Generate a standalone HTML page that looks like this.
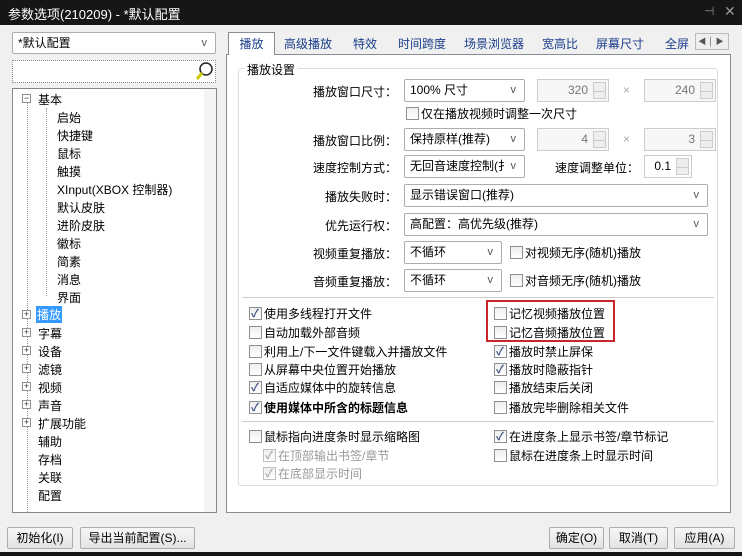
<!DOCTYPE html>
<html><head><meta charset="utf-8"><style>
*{box-sizing:border-box;margin:0;padding:0}
body{width:742px;height:556px;background:#f0f0f0;font-family:"Liberation Sans","Noto Sans CJK SC",sans-serif;font-size:12px;color:#000;position:relative;overflow:hidden}
.a{position:absolute;white-space:nowrap}
.combo{position:absolute;background:#fff;border:1px solid #adadad;border-radius:2px;height:23px;line-height:21px;padding-left:5px}
.combo:after{content:"v";position:absolute;right:8px;top:0;color:#555;font-size:11px}
.spin{position:absolute;background:#f7f7f7;border:1px solid #ccc;height:23px;line-height:21px;text-align:right;padding-right:20px;color:#777}
.spin i{position:absolute;right:2px;top:2px;width:13px;height:17px;border:1px solid #ccc;background:#eee}
.spin i:after{content:"";position:absolute;left:0;right:0;top:8px;border-top:1px solid #ccc}
.cb{position:absolute;width:13px;height:13px;border:1px solid #8e8f8f;background:linear-gradient(#eee,#fff)}
.cb.on:after{content:"✓";position:absolute;left:1px;top:-3px;font-size:11px;color:#3b4f81;font-weight:bold}
.cb.dis{border-color:#c0c0c0}.cb.dis:after{color:#aaa}
.lbl{position:absolute;width:120px;text-align:right;left:277px}
.btn{position:absolute;top:527px;height:22px;border:1px solid #adadad;border-radius:2px;background:linear-gradient(#f6f6f6,#e3e3e3);text-align:center;line-height:20px}
.t{position:absolute;left:57px}
.top{position:absolute;left:38px}
.pm{position:absolute;left:22px;width:9px;height:9px;border:1px solid #919191;background:#fff;font-size:9px;line-height:7px;text-align:center;color:#333}
</style></head><body>
<div class="a" style="left:0;top:0;width:742px;height:25px;background:#161616"></div>
<div class="a" style="left:8px;top:4px;color:#fff;font-size:13px">参数选项(210209) - *默认配置</div>
<div class="a" style="left:704px;top:4px;color:#888;font-size:12px">⊣</div>
<div class="a" style="left:724px;top:3px;color:#999;font-size:14px">✕</div>

<div class="combo" style="left:12px;top:32px;width:204px;height:22px">*默认配置</div>
<div class="a" style="left:12px;top:60px;width:204px;height:23px;background:#fff;border:1px dotted #888"></div>
<svg class="a" style="left:195px;top:61px" width="20" height="20"><circle cx="11" cy="8" r="6" fill="none" stroke="#222" stroke-width="1.5"/><line x1="7" y1="12" x2="2" y2="18" stroke="#cc0" stroke-width="3"/></svg>

<div class="a" style="left:12px;top:88px;width:205px;height:425px;background:#fff;border:1px solid #828790"></div>
<div class="a" style="left:204px;top:89px;width:12px;height:423px;background:#f4f4f4"></div>
<div class="a" style="left:27px;top:102px;height:410px;border-left:1px dotted #999"></div>
<div class="a" style="left:46px;top:108px;height:188px;border-left:1px dotted #999"></div>
<div class="pm" style="top:94px">−</div><div class="top" style="top:91px">基本</div>
<div class="t" style="top:109px">启始</div><div class="t" style="top:127px">快捷键</div><div class="t" style="top:145px">鼠标</div><div class="t" style="top:163px">触摸</div><div class="t" style="top:181px">XInput(XBOX 控制器)</div><div class="t" style="top:199px">默认皮肤</div><div class="t" style="top:217px">进阶皮肤</div><div class="t" style="top:235px">徽标</div><div class="t" style="top:253px">简素</div><div class="t" style="top:271px">消息</div><div class="t" style="top:289px">界面</div>
<div class="pm" style="top:310px">+</div><div class="top" style="top:306px;background:#3399ff;color:#fff;padding:0 1px;left:36px">播放</div>
<div class="pm" style="top:328px">+</div><div class="top" style="top:325px">字幕</div>
<div class="pm" style="top:346px">+</div><div class="top" style="top:343px">设备</div>
<div class="pm" style="top:364px">+</div><div class="top" style="top:361px">滤镜</div>
<div class="pm" style="top:382px">+</div><div class="top" style="top:379px">视频</div>
<div class="pm" style="top:400px">+</div><div class="top" style="top:397px">声音</div>
<div class="pm" style="top:418px">+</div><div class="top" style="top:415px">扩展功能</div>
<div class="top" style="top:433px">辅助</div><div class="top" style="top:451px">存档</div><div class="top" style="top:469px">关联</div><div class="top" style="top:487px">配置</div>

<div class="a" style="left:226px;top:54px;width:505px;height:459px;background:#fff;border:1px solid #898c95"></div>
<div class="a" style="left:228px;top:32px;width:47px;height:23px;background:#fff;border:1px solid #898c95;border-bottom:none;text-align:center;line-height:22px;color:#1a3e8a">播放</div>
<div class="a" style="left:284px;top:35px;color:#1a3e8a">高级播放</div>
<div class="a" style="left:353px;top:35px;color:#1a3e8a">特效</div>
<div class="a" style="left:398px;top:35px;color:#1a3e8a">时间跨度</div>
<div class="a" style="left:464px;top:35px;color:#1a3e8a">场景浏览器</div>
<div class="a" style="left:542px;top:35px;color:#1a3e8a">宽高比</div>
<div class="a" style="left:596px;top:35px;color:#1a3e8a">屏幕尺寸</div>
<div class="a" style="left:665px;top:35px;color:#1a3e8a">全屏</div>
<div class="a" style="left:695px;top:33px;width:34px;height:17px;border:1px solid #bbb;background:#eee;font-size:8px;line-height:15px;color:#555">&nbsp;◀ │ ▶</div>

<div class="a" style="left:238px;top:68px;width:480px;height:418px;border:1px solid #d5dfe5;border-radius:3px"></div>
<div class="a" style="left:244px;top:61px;background:#fff;padding:0 3px">播放设置</div>

<div class="lbl" style="top:83px">播放窗口尺寸：</div>
<div class="combo" style="left:404px;top:79px;width:121px">100% 尺寸</div>
<div class="spin" style="left:537px;top:79px;width:72px">320<i></i></div>
<div class="a" style="left:623px;top:83px;color:#aaa">×</div>
<div class="spin" style="left:644px;top:79px;width:72px">240<i></i></div>
<div class="cb" style="left:406px;top:107px"></div><div class="a" style="left:421px;top:105px">仅在播放视频时调整一次尺寸</div>
<div class="lbl" style="top:132px">播放窗口比例：</div>
<div class="combo" style="left:404px;top:128px;width:121px">保持原样(推荐)</div>
<div class="spin" style="left:537px;top:128px;width:72px">4<i></i></div>
<div class="a" style="left:623px;top:132px;color:#aaa">×</div>
<div class="spin" style="left:644px;top:128px;width:72px">3<i></i></div>
<div class="lbl" style="top:159px">速度控制方式：</div>
<div class="combo" style="left:404px;top:155px;width:121px;overflow:hidden">无回音速度控制(扌</div>
<div class="a" style="left:555px;top:159px">速度调整单位：</div>
<div class="spin" style="left:644px;top:155px;width:48px;background:#fff;color:#000">0.1<i></i></div>
<div class="lbl" style="top:188px">播放失败时：</div>
<div class="combo" style="left:404px;top:184px;width:304px">显示错误窗口(推荐)</div>
<div class="lbl" style="top:217px">优先运行权：</div>
<div class="combo" style="left:404px;top:213px;width:304px">高配置：高优先级(推荐)</div>
<div class="lbl" style="top:245px">视频重复播放：</div>
<div class="combo" style="left:404px;top:241px;width:98px">不循环</div>
<div class="cb" style="left:510px;top:246px"></div><div class="a" style="left:525px;top:244px">对视频无序(随机)播放</div>
<div class="lbl" style="top:273px">音频重复播放：</div>
<div class="combo" style="left:404px;top:269px;width:98px">不循环</div>
<div class="cb" style="left:510px;top:274px"></div><div class="a" style="left:525px;top:272px">对音频无序(随机)播放</div>

<div class="a" style="left:242px;top:297px;width:472px;border-top:1px solid #ccc"></div>
<div class="a" style="left:486px;top:300px;width:129px;height:42px;border:2px solid #c9252b"></div>
<div class="cb on" style="left:249px;top:307px"></div><div class="a" style="left:264px;top:305px">使用多线程打开文件</div>
<div class="cb" style="left:249px;top:326px"></div><div class="a" style="left:264px;top:324px">自动加载外部音频</div>
<div class="cb" style="left:249px;top:345px"></div><div class="a" style="left:264px;top:343px">利用上/下一文件键载入并播放文件</div>
<div class="cb" style="left:249px;top:363px"></div><div class="a" style="left:264px;top:361px">从屏幕中央位置开始播放</div>
<div class="cb on" style="left:249px;top:381px"></div><div class="a" style="left:264px;top:379px">自适应媒体中的旋转信息</div>
<div class="cb on" style="left:249px;top:401px"></div><div class="a" style="left:264px;top:399px;font-weight:bold">使用媒体中所含的标题信息</div>
<div class="cb" style="left:494px;top:307px"></div><div class="a" style="left:509px;top:305px">记忆视频播放位置</div>
<div class="cb" style="left:494px;top:326px"></div><div class="a" style="left:509px;top:324px">记忆音频播放位置</div>
<div class="cb on" style="left:494px;top:345px"></div><div class="a" style="left:509px;top:343px">播放时禁止屏保</div>
<div class="cb on" style="left:494px;top:363px"></div><div class="a" style="left:509px;top:361px">播放时隐蔽指针</div>
<div class="cb" style="left:494px;top:381px"></div><div class="a" style="left:509px;top:379px">播放结束后关闭</div>
<div class="cb" style="left:494px;top:401px"></div><div class="a" style="left:509px;top:399px">播放完毕删除相关文件</div>
<div class="a" style="left:242px;top:421px;width:472px;border-top:1px solid #ccc"></div>
<div class="cb" style="left:249px;top:430px"></div><div class="a" style="left:264px;top:428px">鼠标指向进度条时显示缩略图</div>
<div class="cb on dis" style="left:263px;top:449px"></div><div class="a" style="left:278px;top:447px;color:#999">在顶部输出书签/章节</div>
<div class="cb on dis" style="left:263px;top:467px"></div><div class="a" style="left:278px;top:465px;color:#999">在底部显示时间</div>
<div class="cb on" style="left:494px;top:430px"></div><div class="a" style="left:509px;top:428px">在进度条上显示书签/章节标记</div>
<div class="cb" style="left:494px;top:449px"></div><div class="a" style="left:509px;top:447px">鼠标在进度条上时显示时间</div>

<div class="btn" style="left:7px;width:66px">初始化(I)</div>
<div class="btn" style="left:80px;width:115px">导出当前配置(S)...</div>
<div class="btn" style="left:549px;width:55px">确定(O)</div>
<div class="btn" style="left:609px;width:59px">取消(T)</div>
<div class="btn" style="left:674px;width:61px">应用(A)</div>
<div class="a" style="left:0;top:552px;width:742px;height:4px;background:#161616"></div>
</body></html>
